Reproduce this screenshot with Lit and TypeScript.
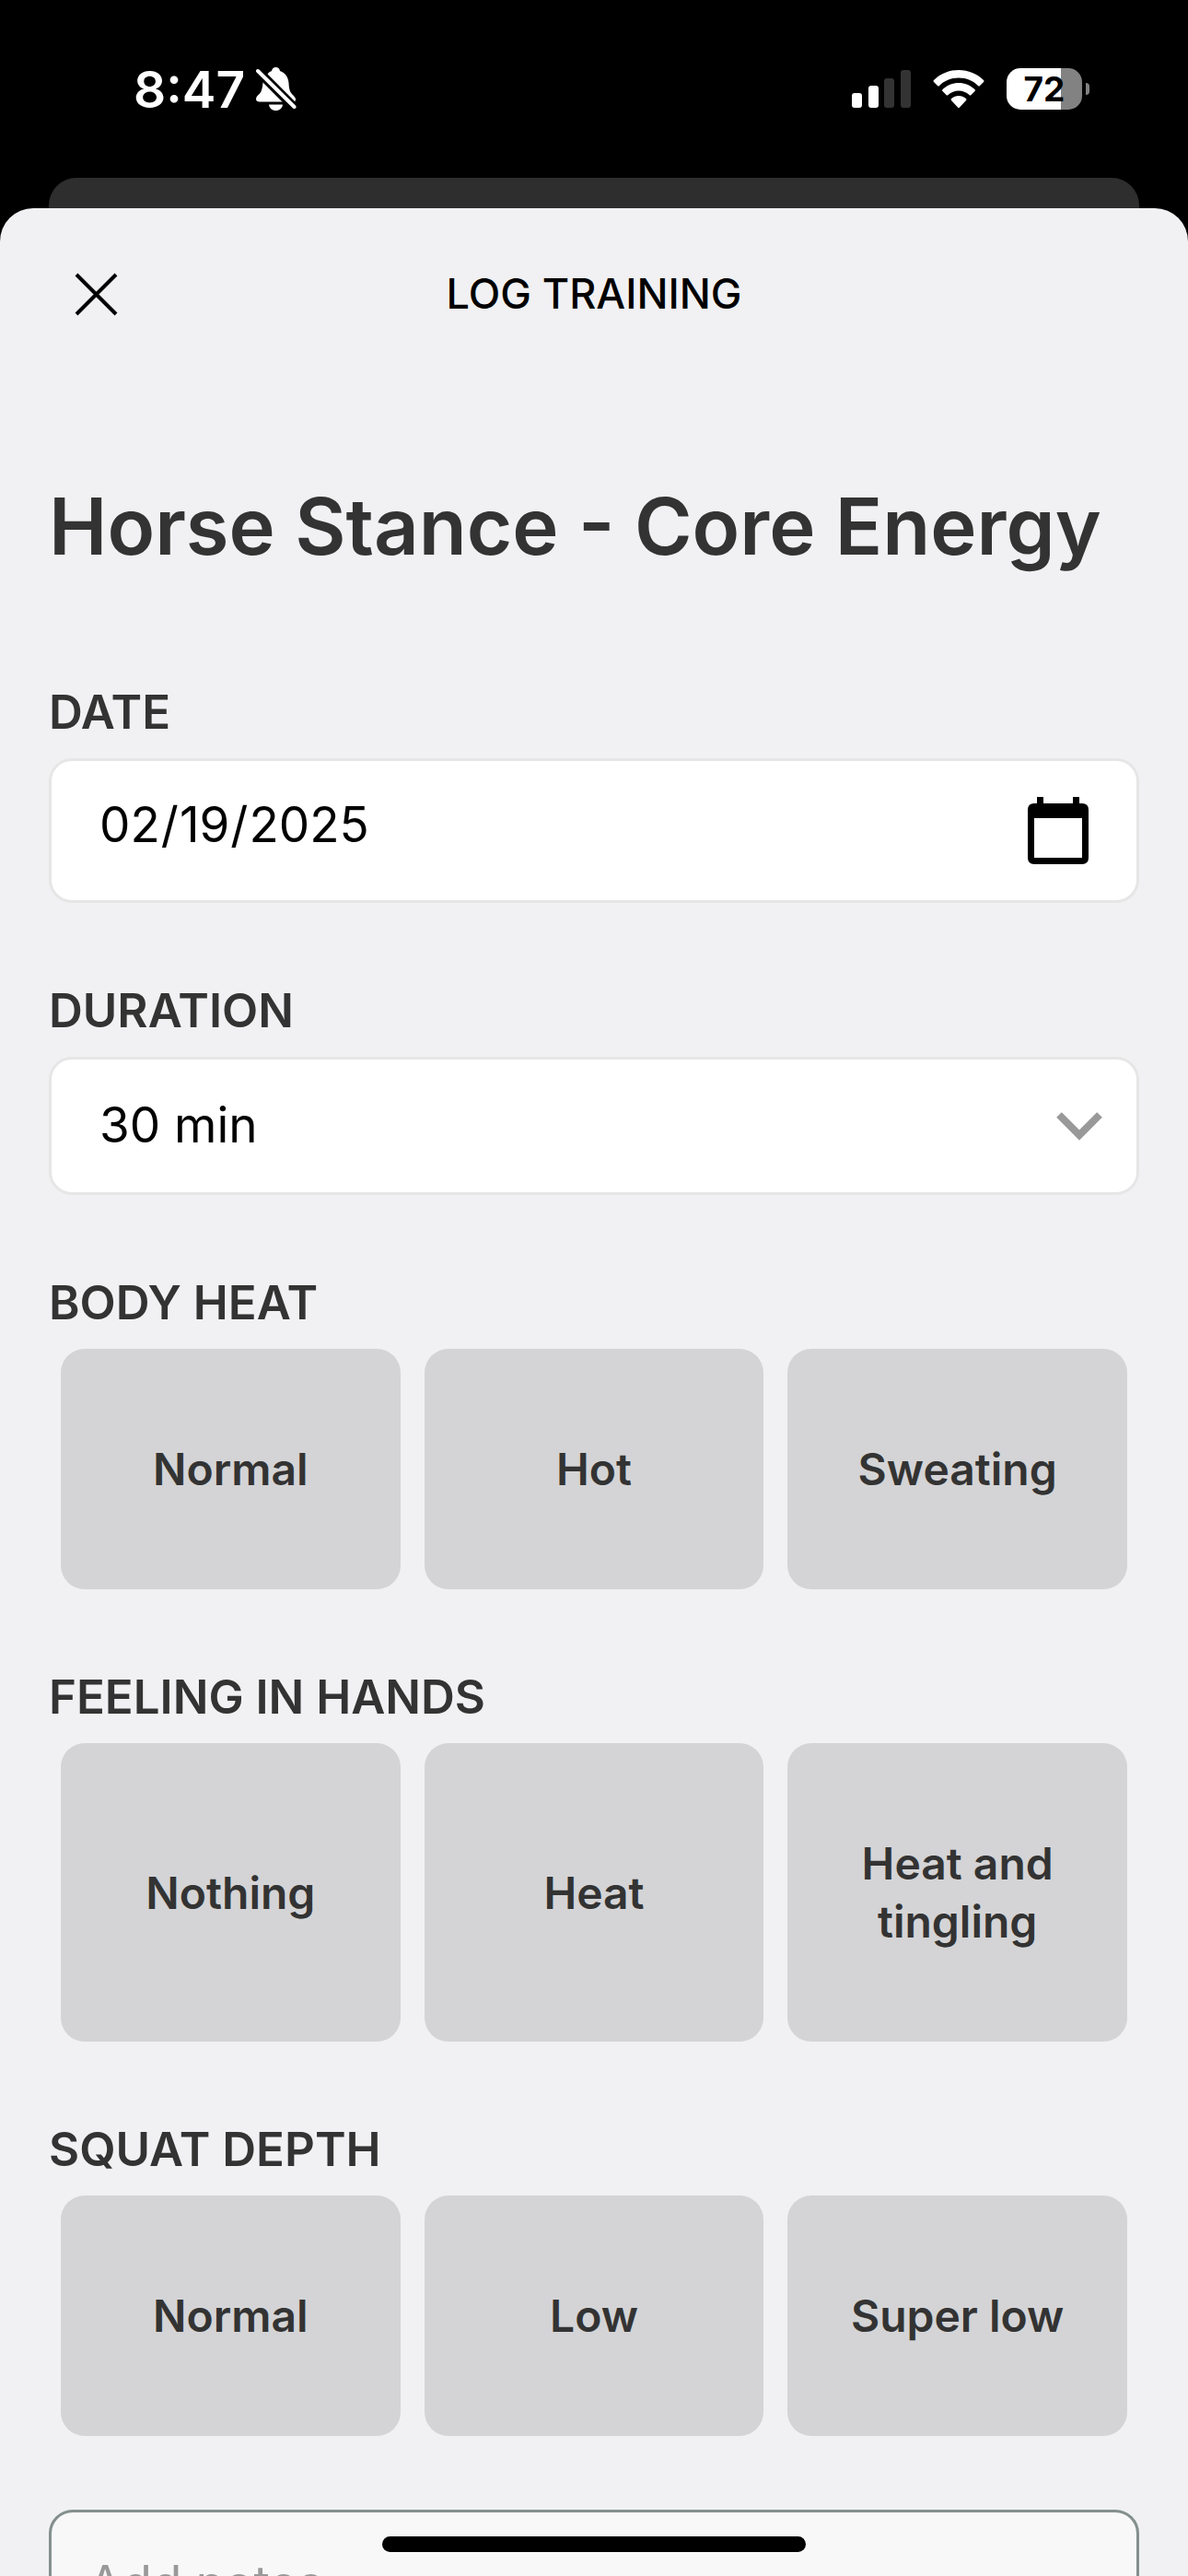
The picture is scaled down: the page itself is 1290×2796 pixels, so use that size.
import { LitElement, html, css, svg } from "lit";
import { customElement, property, state } from "lit/decorators.js";

@customElement("status-bar")
class StatusBar extends LitElement {
  static styles = css`
    :host {
      display: flex;
      justify-content: space-between;
      align-items: center;
      height: 193px;
      padding: 0 107px 0 145px;
      box-sizing: border-box;
      color: #fff;
      font-family: Inter, "Liberation Sans", sans-serif;
    }
    .side {
      display: flex;
      align-items: center;
    }
    .left {
      gap: 12px;
    }
    .right {
      gap: 24px;
    }
    .time {
      font-size: 55px;
      line-height: 64px;
      font-weight: 600;
    }
    svg {
      display: block;
    }
    .battery {
      display: flex;
      align-items: center;
      gap: 4px;
    }
    .cell {
      width: 82px;
      height: 45px;
      border-radius: 15px;
      background: linear-gradient(to right, #fff 72%, #828282 72%);
      color: #000;
      font-size: 37px;
      line-height: 45px;
      font-weight: 700;
      text-align: center;
    }
    .tip {
      width: 4px;
      height: 13px;
      border-radius: 0 4px 4px 0;
      background: #828282;
    }
  `;

  render() {
    return html`
      <div class="side left">
        <span class="time">8:47</span>
        <svg width="44" height="48" viewBox="0 0 44 48" aria-label="Silent">
          <path
            fill="#fff"
            d="M12 8C14 5 16 4.500 17 4C17.500 1.500 19 0 21.500 0S25.500 1.500 26 4C32 6 35 11 35.500 17C36 25 37 27 40 30C42 32 43 33.500 43 35Q43 37.500 40 37.500H4Q0 37.500 0 34.500C0 32 2 30.500 4 28.500C6.500 26 7 21 7.500 17Q8 12 12 8Z"
          ></path>
          <path fill="#fff" d="M14 40.500H29C28.500 44.500 25.500 47 21.500 47S14.500 44.500 14 40.500Z"></path>
          <path stroke="#000" stroke-width="10" d="M-2 0L46 48"></path>
          <path stroke="#fff" stroke-width="4" stroke-linecap="round" d="M2 4L41.500 43"></path>
        </svg>
      </div>
      <div class="side right">
        <svg width="64" height="42" viewBox="0 0 64 42" aria-label="Signal">
          <rect x="0" y="25" width="11" height="16" rx="3" fill="#fff"></rect>
          <rect x="18" y="17" width="11" height="24" rx="3" fill="#fff"></rect>
          <rect x="35" y="9" width="11" height="32" rx="3" fill="#333"></rect>
          <rect x="53" y="0" width="11" height="41" rx="3" fill="#333"></rect>
        </svg>
        <svg width="56" height="42" viewBox="0 0 56 42" aria-label="Wi-Fi" fill="#fff">
          <path d="M28 0C38.500 0 48 4 55 11Q56 12 55 13L51 17Q50 18 49 17C43.500 11.500 36.500 8.500 28 8.500S12.500 11.500 7 17Q6 18 5 17L1 13Q0 12 1 11C8 4 17.500 0 28 0Z"></path>
          <path d="M28 14C34.500 14 40.500 16.500 45.500 21Q46.500 22 45.500 23L41.500 27Q40.500 28 39.500 27C36 24 32.500 22.500 28 22.500S20 24 16.500 27Q15.500 28 14.500 27L10.500 23Q9.500 22 10.500 21C15.500 16.500 21.500 14 28 14Z"></path>
          <path d="M28 28C31 28 33.500 29 36 31Q37 32 36 33L29 40.500Q28 41.500 27 40.500L20 33Q19 32 20 31C22.500 29 25 28 28 28Z"></path>
        </svg>
        <div class="battery"><div class="cell">72</div><div class="tip"></div></div>
      </div>
    `;
  }
}

@customElement("choice-group")
class ChoiceGroup extends LitElement {
  @property() heading = "";
  @property({ attribute: false }) options: string[] = [];
  @state() private selected = "";

  static styles = css`
    :host {
      display: block;
    }
    .heading {
      margin: 0 0 13px;
      font-size: 51px;
      line-height: 74px;
      font-weight: 600;
    }
    .row {
      display: grid;
      grid-template-columns: repeat(3, 1fr);
      gap: 26px;
      padding: 0 13px;
    }
    .choice {
      margin: 0;
      padding: 99px 40px;
      border: 0;
      border-radius: 26px;
      background: #d4d4d6;
      color: #333;
      font: inherit;
      font-size: 48px;
      line-height: 63px;
      font-weight: 600;
      cursor: pointer;
    }
    .choice[aria-pressed="true"] {
      background: #333;
      color: #fff;
    }
  `;

  render() {
    return html`
      <h2 class="heading" id="heading">${this.heading}</h2>
      <div class="row" role="group" aria-labelledby="heading">
        ${this.options.map(
          (option) => html`<button
            class="choice"
            type="button"
            aria-pressed=${this.selected === option ? "true" : "false"}
            @click=${() => (this.selected = option)}
          >${option}</button>`
        )}
      </div>
    `;
  }
}

const closeIcon = svg`<path d="M2 2L45 45M45 2L2 45" stroke="#000" stroke-width="4"></path>`;

@customElement("app-root")
class AppRoot extends LitElement {
  static styles = css`
    :host {
      display: flex;
      flex-direction: column;
      position: relative;
      height: 100vh;
      overflow: hidden;
      background: #000;
      color: #333;
      font-family: Inter, "Liberation Sans", sans-serif;
    }
    .behind {
      flex: none;
      height: 33px;
      margin: 0 53px;
      border-radius: 30px 30px 0 0;
      background: #2e2e2e;
    }
    .sheet {
      flex: 1;
      min-height: 0;
      overflow-y: auto;
      scrollbar-width: none;
      border-radius: 36px 36px 0 0;
      background: #f1f1f3;
    }
    .header {
      display: grid;
      grid-template-columns: 1fr auto 1fr;
      align-items: center;
      height: 186px;
      padding: 0 53px;
      color: #000;
    }
    .close {
      justify-self: start;
      padding: 28px;
      border: 0;
      background: none;
    }
    .close svg,
    .calendar,
    .chevron {
      display: block;
    }
    .heading {
      margin: 0;
      font-size: 45px;
      line-height: 64px;
      font-weight: 500;
    }
    .form {
      display: flex;
      flex-direction: column;
      gap: 80px;
      padding: 100px 53px 120px;
    }
    .title {
      margin: 0 0 24px;
      font-size: 85px;
      line-height: 120px;
      font-weight: 600;
    }
    .label {
      display: block;
      margin-bottom: 13px;
      font-size: 51px;
      line-height: 74px;
      font-weight: 600;
    }
    .box {
      display: grid;
      align-items: center;
      border: 3px solid #e6e6e6;
      border-radius: 25px;
      background: #fff;
    }
    .box > * {
      grid-area: 1 / 1;
    }
    .input {
      width: 100%;
      box-sizing: border-box;
      margin: 0;
      border: 0;
      border-radius: 22px;
      background: none;
      color: #000;
      font: inherit;
      font-size: 53px;
      line-height: 74px;
      appearance: none;
      outline: none;
    }
    .date {
      height: 151px;
      padding: 0 40px 14px 51px;
    }
    .date::-webkit-datetime-edit,
    .date::-webkit-datetime-edit-fields-wrapper {
      padding: 0;
    }
    .date::-webkit-calendar-picker-indicator {
      width: 74px;
      height: 74px;
      opacity: 0;
    }
    .select {
      height: 144px;
      padding: 0 110px 2px 52px;
    }
    .calendar,
    .chevron {
      justify-self: end;
      pointer-events: none;
    }
    .calendar {
      margin-right: 52px;
    }
    .chevron {
      margin-right: 37px;
    }
    .notes {
      display: block;
      width: 100%;
      height: 320px;
      box-sizing: border-box;
      margin: 0;
      padding: 40px;
      border: 3px solid #84908d;
      border-radius: 26px;
      background: #f8f8f8;
      color: #000;
      font: inherit;
      font-size: 53px;
      line-height: 74px;
      resize: none;
      outline: none;
    }
    .notes::placeholder {
      color: #999;
      opacity: 1;
    }
    .home {
      position: absolute;
      left: 50%;
      bottom: 26px;
      width: 460px;
      height: 17px;
      border-radius: 9px;
      background: #000;
      transform: translateX(-50%);
    }
  `;

  render() {
    return html`
      <status-bar></status-bar>
      <div class="behind"></div>
      <main class="sheet">
        <header class="header">
          <button class="close" type="button" aria-label="Close">
            <svg width="47" height="47" viewBox="0 0 47 47">${closeIcon}</svg>
          </button>
          <h1 class="heading">LOG TRAINING</h1>
        </header>
        <form class="form">
          <h2 class="title">Horse Stance - Core Energy</h2>
          <div>
            <label class="label" for="date">DATE</label>
            <div class="box">
              <input class="input date" id="date" type="date" value="2025-02-19" />
              <svg class="calendar" width="66" height="73" viewBox="0 0 66 73">
                <path
                  fill-rule="evenodd"
                  d="M10 0H17V7H49V0H56V7H59Q66 7 66 14V66Q66 73 59 73H7Q0 73 0 66V14Q0 7 7 7H10ZM7 23V66H59V23Z"
                ></path>
              </svg>
            </div>
          </div>
          <div>
            <label class="label" for="duration">DURATION</label>
            <div class="box">
              <select class="input select" id="duration">
                <option>30 min</option>
              </select>
              <svg class="chevron" width="50" height="31" viewBox="0 0 50 31">
                <path d="M3 3L25 25L47 3" fill="none" stroke="#999" stroke-width="8"></path>
              </svg>
            </div>
          </div>
          <choice-group heading="BODY HEAT" .options=${["Normal", "Hot", "Sweating"]}></choice-group>
          <choice-group
            heading="FEELING IN HANDS"
            .options=${["Nothing", "Heat", "Heat and tingling"]}
          ></choice-group>
          <choice-group heading="SQUAT DEPTH" .options=${["Normal", "Low", "Super low"]}></choice-group>
          <textarea class="notes" aria-label="Notes" placeholder="Add notes..."></textarea>
        </form>
      </main>
      <div class="home"></div>
    `;
  }
}
